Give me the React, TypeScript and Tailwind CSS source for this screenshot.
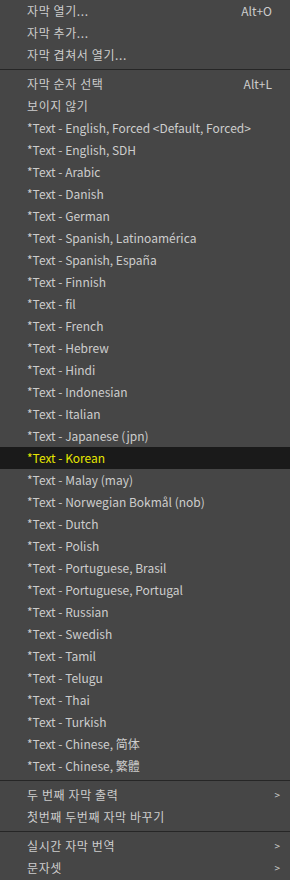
import React from "react";

type Item =
  | { type: "item"; label: string; shortcut?: string; arrow?: boolean; active?: boolean }
  | { type: "sep" };

const langs = [
  "*Text - English, Forced <Default, Forced>",
  "*Text - English, SDH",
  "*Text - Arabic",
  "*Text - Danish",
  "*Text - German",
  "*Text - Spanish, Latinoamérica",
  "*Text - Spanish, España",
  "*Text - Finnish",
  "*Text - fil",
  "*Text - French",
  "*Text - Hebrew",
  "*Text - Hindi",
  "*Text - Indonesian",
  "*Text - Italian",
  "*Text - Japanese (jpn)",
  "*Text - Korean",
  "*Text - Malay (may)",
  "*Text - Norwegian Bokmål (nob)",
  "*Text - Dutch",
  "*Text - Polish",
  "*Text - Portuguese, Brasil",
  "*Text - Portuguese, Portugal",
  "*Text - Russian",
  "*Text - Swedish",
  "*Text - Tamil",
  "*Text - Telugu",
  "*Text - Thai",
  "*Text - Turkish",
  "*Text - Chinese, 简体",
  "*Text - Chinese, 繁體",
];

const items: Item[] = [
  { type: "item", label: "자막 열기...", shortcut: "Alt+O" },
  { type: "item", label: "자막 추가..." },
  { type: "item", label: "자막 겹쳐서 열기..." },
  { type: "sep" },
  { type: "item", label: "자막 순자 선택", shortcut: "Alt+L" },
  { type: "item", label: "보이지 않기" },
  ...langs.map((l) => ({ type: "item" as const, label: l, active: l === "*Text - Korean" })),
  { type: "sep" },
  { type: "item", label: "두 번째 자막 출력", arrow: true },
  { type: "item", label: "첫번째 두번째 자막 바꾸기" },
  { type: "sep" },
  { type: "item", label: "실시간 자막 번역", arrow: true },
  { type: "item", label: "문자셋", arrow: true },
];

export default function App() {
  return (
    <div
      className="w-[290px] h-[880px] bg-[#464646] flex flex-col text-[12px] text-[#cdcdcd] overflow-hidden"
      style={{ fontFamily: '"Noto Sans CJK KR", "Noto Sans", sans-serif' }}
    >
      {items.map((it, i) =>
        it.type === "sep" ? (
          <div key={i} className="h-[7px] flex flex-col pt-[3px]">
            <div className="h-px bg-[#262626]" />
          </div>
        ) : (
          <div
            key={i}
            className={
              "h-[22px] flex items-center pl-[27px] shrink-0 " +
              (it.active ? "bg-[#1a1a1a] text-[#e6e600]" : "")
            }
          >
            <span
              className={
                "flex-1 whitespace-nowrap leading-none " +
                (it.label.startsWith("*Text") ? "" : "tracking-[0.6px]")
              }
            >
              {it.label}
            </span>
            {it.shortcut && <span className="pr-[18px] leading-none">{it.shortcut}</span>}
            {it.arrow && <span className="pr-[10px] text-[10px] leading-none">&gt;</span>}
          </div>
        )
      )}
    </div>
  );
}
